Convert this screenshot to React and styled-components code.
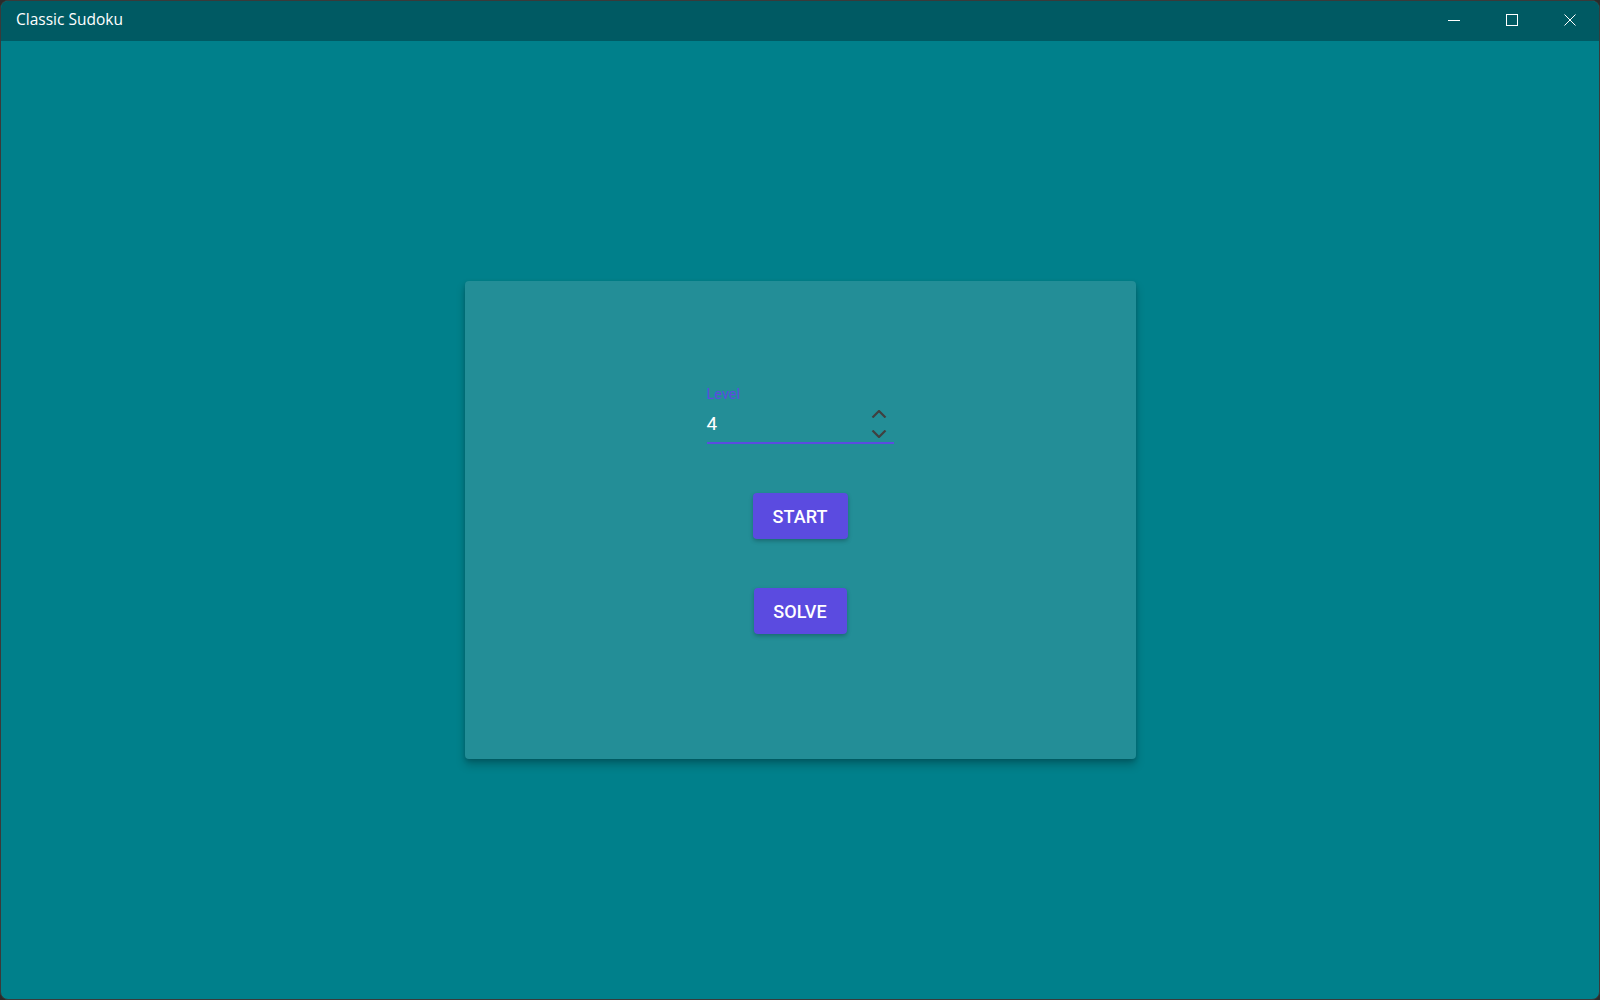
import React from "react";
import styled, { createGlobalStyle } from "styled-components";

const Global = createGlobalStyle`
  html, body { margin: 0; padding: 0; background: #2b2b2b; }
  #root { width: 1600px; height: 1000px; }
`;

const Window = styled.div`
  width: 1600px;
  height: 1000px;
  box-sizing: border-box;
  border: 1px solid #3a3a3a;
  border-radius: 8px;
  overflow: hidden;
  display: flex;
  flex-direction: column;
  background: #00808b;
`;

const TitleBar = styled.div`
  height: 40px;
  flex: none;
  background: #005a63;
  display: flex;
  align-items: center;
  justify-content: space-between;
  padding-left: 15px;
`;

const Title = styled.span`
  font-family: "Segoe UI", "Open Sans", "Noto Sans", sans-serif;
  font-size: 15.5px;
  color: #ffffff;
  margin-top: -4px;
`;

const Controls = styled.div`
  display: flex;
  height: 100%;
`;

const CtrlButton = styled.div`
  width: 58px;
  height: 100%;
  display: flex;
  align-items: center;
  justify-content: center;
  color: #fff;
  margin-top: -1px;
`;

const Body = styled.div`
  flex: 1;
  display: flex;
  align-items: center;
  justify-content: center;
`;

const Card = styled.div`
  width: 671px;
  height: 478px;
  background: #238e97;
  border-radius: 4px;
  box-shadow: 0 6px 10px rgba(0, 0, 0, 0.22), 0 2px 4px rgba(0, 0, 0, 0.15);
  display: flex;
  flex-direction: column;
  align-items: center;
  padding-top: 106px;
  box-sizing: border-box;
`;

const Field = styled.div`
  width: 187px;
  display: flex;
  flex-direction: column;
`;

const Label = styled.label`
  font-family: Roboto, "Noto Sans", sans-serif;
  font-size: 14.5px;
  color: #5b4ce0;
  line-height: 16px;
  height: 16px;
`;

const InputRow = styled.div`
  display: flex;
  align-items: center;
  justify-content: space-between;
  height: 41px;
  border-bottom: 2px solid #5b4ce0;
  box-sizing: border-box;
`;

const Value = styled.span`
  font-family: Roboto, "Noto Sans", sans-serif;
  font-size: 19px;
  font-weight: 400;
  color: #ffffff;
  margin-top: 2px;
`;

const Spinner = styled.div`
  display: flex;
  flex-direction: column;
  gap: 12px;
  margin-right: 7px;
  margin-top: 2px;
`;

const ActionButton = styled.button`
  width: ${(p) => p.$w}px;
  height: 46px;
  margin-top: ${(p) => p.$mt}px;
  border: none;
  border-radius: 4px;
  background: #5b4be0;
  color: #ffffff;
  font-family: Roboto, "Noto Sans", sans-serif;
  font-weight: 500;
  font-size: 18px;
  letter-spacing: 0.1px;
  box-shadow: 0 2px 4px rgba(0, 0, 0, 0.25);
  cursor: pointer;
  padding: 0;
`;

const Chevron = ({ up }) => (
  <svg width="16" height="8" viewBox="0 0 16 8">
    <path
      d={up ? "M1.5 7.5 L8 1 L14.5 7.5" : "M1.5 0.5 L8 7 L14.5 0.5"}
      fill="none"
      stroke="#404040"
      strokeWidth="2.2"
    />
  </svg>
);

export default function App() {
  return (
    <>
      <Global />
      <Window>
        <TitleBar>
          <Title>Classic Sudoku</Title>
          <Controls>
            <CtrlButton>
              <svg width="12" height="12" viewBox="0 0 12 12">
                <path d="M0 6.5 H12" stroke="#fff" strokeWidth="1" />
              </svg>
            </CtrlButton>
            <CtrlButton>
              <svg width="12" height="12" viewBox="0 0 12 12">
                <rect x="0.5" y="0.5" width="11" height="11" fill="none" stroke="#fff" strokeWidth="1" />
              </svg>
            </CtrlButton>
            <CtrlButton>
              <svg width="12" height="12" viewBox="0 0 12 12">
                <path d="M0.5 0.5 L11.5 11.5 M11.5 0.5 L0.5 11.5" stroke="#fff" strokeWidth="1" />
              </svg>
            </CtrlButton>
          </Controls>
        </TitleBar>
        <Body>
          <Card>
            <Field>
              <Label>Level</Label>
              <InputRow>
                <Value>4</Value>
                <Spinner>
                  <Chevron up />
                  <Chevron />
                </Spinner>
              </InputRow>
            </Field>
            <ActionButton $w={95} $mt={49}>START</ActionButton>
            <ActionButton $w={93} $mt={49}>SOLVE</ActionButton>
          </Card>
        </Body>
      </Window>
    </>
  );
}
